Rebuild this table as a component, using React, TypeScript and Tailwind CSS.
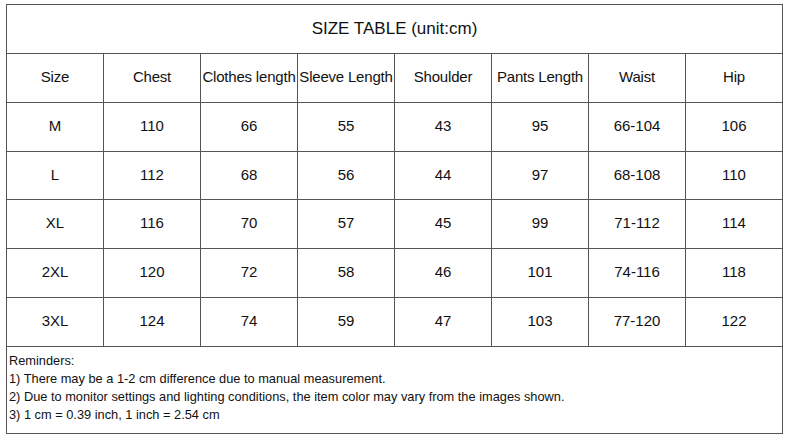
const headers = ["Size", "Chest", "Clothes length", "Sleeve Length", "Shoulder", "Pants Length", "Waist", "Hip"];

const rows = [
  ["M", "110", "66", "55", "43", "95", "66-104", "106"],
  ["L", "112", "68", "56", "44", "97", "68-108", "110"],
  ["XL", "116", "70", "57", "45", "99", "71-112", "114"],
  ["2XL", "120", "72", "58", "46", "101", "74-116", "118"],
  ["3XL", "124", "74", "59", "47", "103", "77-120", "122"],
];

const cell = "border border-[#555] text-center align-middle p-0";

export default function App() {
  return (
    <div className="w-[790px] h-[440px] bg-white pl-[6px] pt-[4px] text-[#111] font-['Liberation_Sans',Arial,sans-serif]">
      <table className="table-fixed border-collapse w-[777px]">
        <tbody>
          <tr className="h-[49px]">
            <td colSpan={8} className={`${cell} text-[17px]`}>
              SIZE TABLE (unit:cm)
            </td>
          </tr>
          <tr className="h-[49px]">
            {headers.map((h) => (
              <td key={h} className={`${cell} text-[15px] whitespace-nowrap tracking-[-0.2px] pb-[2px]`}>
                {h}
              </td>
            ))}
          </tr>
          {rows.map((r, ri) => (
            <tr key={r[0]} className={ri === 1 ? "h-[48px]" : "h-[49px]"}>
              {r.map((v, i) => (
                <td key={i} className={`${cell} text-[15px] pb-[1px]`}>
                  {v}
                </td>
              ))}
            </tr>
          ))}
          <tr className="h-[87px]">
            <td colSpan={8} className="border border-[#555] align-top text-left pl-[2px] pt-[5px] text-[12.8px] leading-[18px]">
              <div>Reminders:</div>
              <div>1) There may be a 1-2 cm difference due to manual measurement.</div>
              <div>2) Due to monitor settings and lighting conditions, the item color may vary from the images shown.</div>
              <div>3) 1 cm = 0.39 inch, 1 inch = 2.54 cm</div>
            </td>
          </tr>
        </tbody>
      </table>
    </div>
  );
}
